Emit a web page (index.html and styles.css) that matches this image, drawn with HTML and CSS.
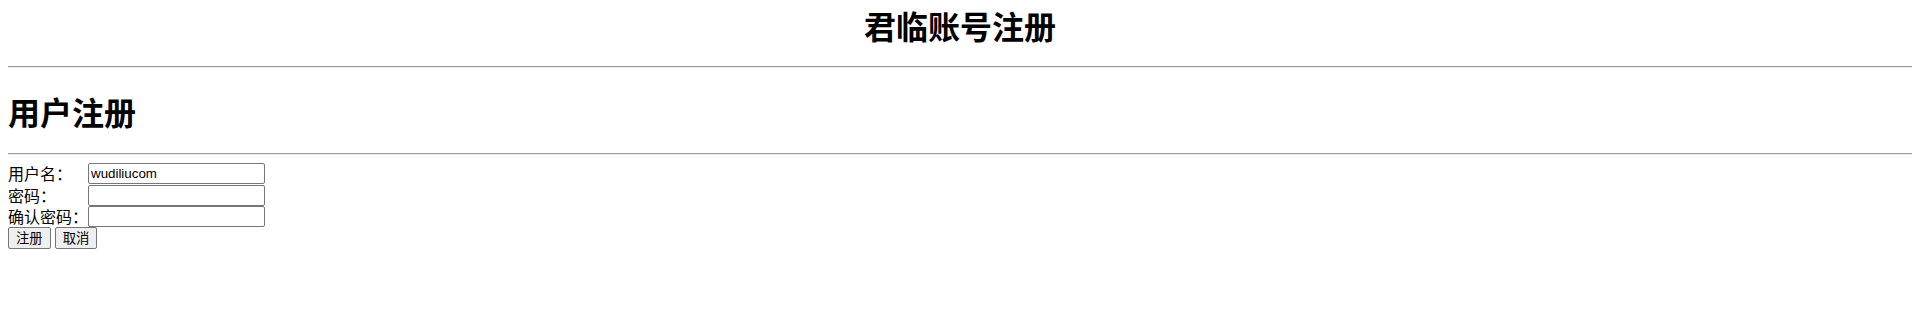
FILE: index.html
```html
<!DOCTYPE html>
<html lang="zh-CN">
<head>
<meta charset="utf-8">
<title>君临账号注册</title>
<link rel="stylesheet" href="styles.css">
</head>
<body>
<h1 class="site-title">君临账号注册</h1>
<hr class="rule">
<h2 class="section-title">用户注册</h2>
<hr class="rule rule-second">
<form class="reg-form">
  <div class="fields">
    <label class="field-label" for="u">用户名：</label>
    <input class="field-input" id="u" type="text" value="wudiliucom">
    <label class="field-label" for="p">密码：</label>
    <input class="field-input" id="p" type="password">
    <label class="field-label" for="c">确认密码：</label>
    <input class="field-input" id="c" type="password">
  </div>
  <div class="actions">
    <button class="btn" type="submit">注册</button>
    <button class="btn" type="button">取消</button>
  </div>
</form>
</body>
</html>
```
FILE: styles.css
```css
html, body {
  background: #ffffff;
}
body {
  margin: 8px;
  color: #000000;
  font-family: "Noto Sans CJK SC", "Noto Sans", sans-serif;
  font-size: 16px;
}
.site-title {
  margin: 0 0 24px 0;
  font-size: 32px;
  line-height: 34px;
  font-weight: 700;
  text-align: center;
}
.rule {
  margin: 8px 0;
  height: 0;
  border: 0;
  border-top: 1px solid #9a9a9a;
  border-bottom: 1px solid #eeeeee;
}
.section-title {
  margin: 26px 0 25px 0;
  font-size: 32px;
  line-height: 34px;
  font-weight: 700;
}
.reg-form {
  margin: 0;
}
.fields {
  display: grid;
  grid-template-columns: 80px 177px;
  grid-auto-rows: 21px;
  row-gap: 0.5px;
  align-items: center;
}
.field-label {
  font-size: 16px;
  line-height: 21px;
  white-space: nowrap;
}
.field-input {
  box-sizing: border-box;
  width: 177px;
  height: 21px;
  margin: 0;
  padding: 1px 2px;
  border: 1px solid #767676;
  border-radius: 2px;
  background: #ffffff;
  color: #000000;
  font-family: "Liberation Sans", Arial, sans-serif;
  font-size: 13.333px;
}
.actions {
  display: flex;
  gap: 4px;
  margin-top: 0;
}
.btn {
  box-sizing: border-box;
  height: 22px;
  margin: 0;
  padding: 0 7px;
  border: 1px solid #767676;
  border-radius: 2px;
  background: #efefef;
  color: #000000;
  font-family: "Noto Sans CJK SC", sans-serif;
  font-size: 13.333px;
  line-height: 18px;
}
```
